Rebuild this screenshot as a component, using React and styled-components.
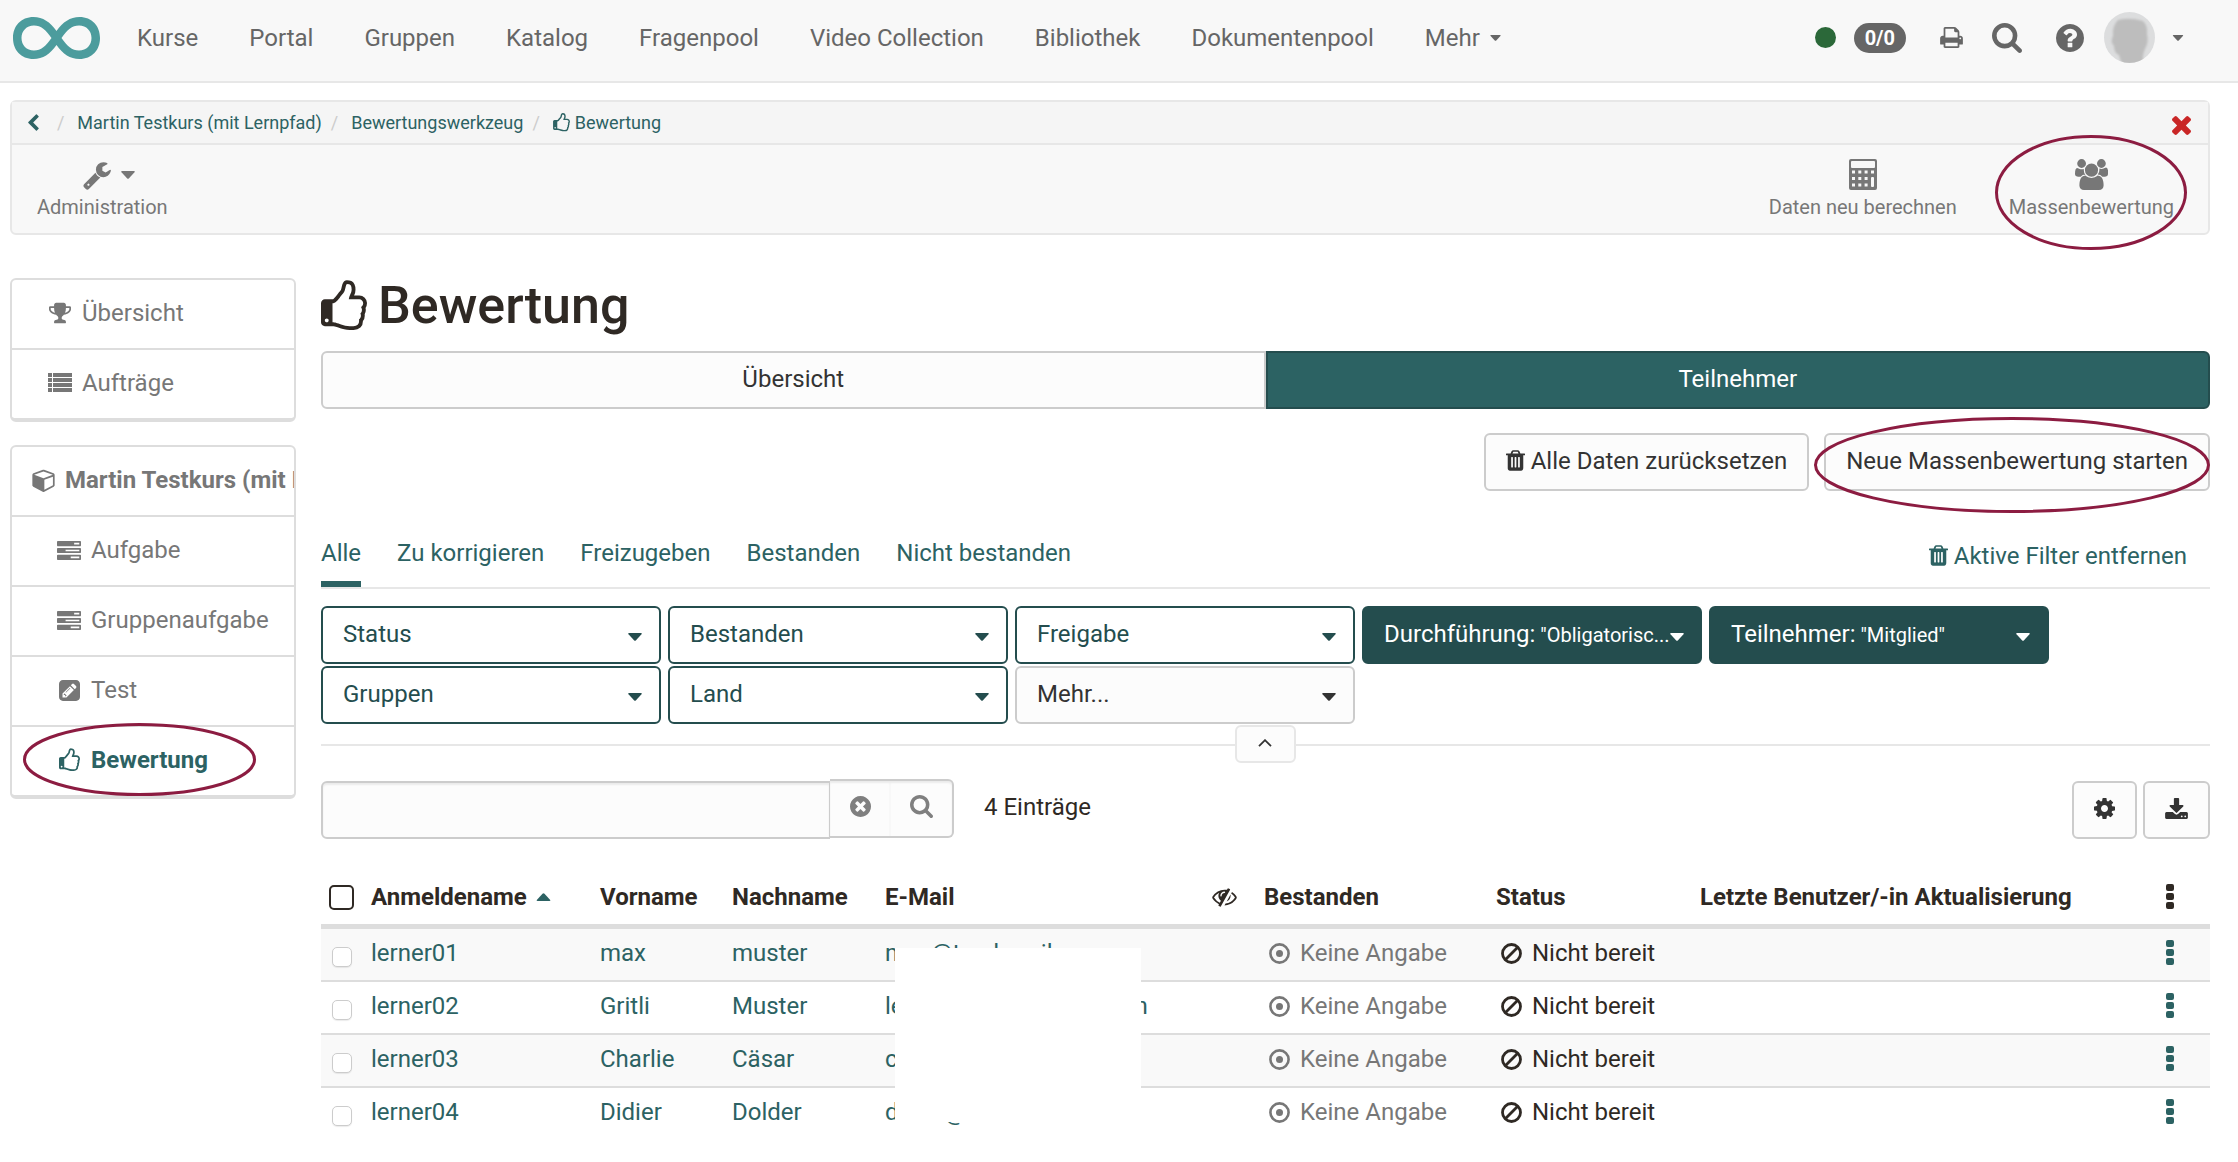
import React from "react";
import styled, { createGlobalStyle } from "styled-components";

const teal = "#2c6263";
const darkTeal = "#244d4e";
const grey = "#777";
const ink = "#2f2924";

const GlobalStyle = createGlobalStyle`
  *, *::before, *::after { box-sizing: border-box; }
  body {
    margin: 0;
    background: #fff;
    color: ${ink};
    font-family: Roboto, "Liberation Sans", sans-serif;
    font-size: 24px;
    line-height: 34px;
  }
  button, input { font: inherit; color: inherit; margin: 0; }
  button { cursor: pointer; }
  a { color: inherit; text-decoration: none; }
`;

/* ---------- icons ---------- */

const glyphs = {
  thumb: ["128 0 1536 1728", "M384 1344q0-26-19-45t-45-19-45 19-19 45 19 45 45 19 45-19 19-45zm1152-576q0-51-39-89.5t-89-38.5h-352q0-58 48-159.5t48-160.5q0-98-32-145t-128-47q-26 26-38 85t-30.5 125.5-59.5 109.5q-22 23-77 91-4 5-23 30t-31.5 41-34.5 42.5-40 44-38.5 35.5-40 27-35.5 9h-32v640h32q13 0 31.5 3t33 6.5 38 11 35 11.5 35.5 12.5 29 10.5q211 73 342 73h121q192 0 192-167 0-26-5-56 30-16 47.5-52.5t17.5-73.5-18-69q53-50 53-119 0-25-10-55.5t-25-47.5q32-1 53.5-47t21.5-81zm128-1q0 89-49 163 9 33 9 69 0 77-38 144 3 21 3 43 0 101-60 178 1 139-85 219.5t-227 80.5h-129q-96 0-189.5-22.5t-216.5-65.5q-116-40-138-40h-288q-53 0-90.5-37.5t-37.5-90.5v-640q0-53 37.5-90.5t90.5-37.5h274q36-24 137-155 58-75 107-128 24-25 35.5-85.5t30.5-126.5 62-108q39-37 90-37 84 0 151 32.5t102 101.5 35 186q0 93-48 192h176q104 0 180 76t76 179z"],
  wrench: ["64 0 1664 1792", "M448 1472q0-26-19-45t-45-19-45 19-19 45 19 45 45 19 45-19 19-45zm644-420l-682 682q-37 37-90 37-52 0-91-37l-106-108q-38-36-38-90 0-53 38-91l681-681q39 98 114.5 173.5t173.5 114.5zm634-435q0 39-23 106-47 134-164.5 217.5t-258.5 83.5q-185 0-316.5-131.5t-131.5-316.5 131.5-316.5 316.5-131.5q58 0 121.5 16.5t107.5 46.5q16 11 16 28t-16 28l-293 169v224l193 107q5-3 79-48.5t135.5-81 70.5-35.5q15 0 23.5 10t8.5 25z"],
  trophy: ["64 64 1664 1664", "M522 883q-74-162-74-371h-256v96q0 78 94.5 162t235.5 113zm1078-275v-96h-256q0 209-74 371 141-29 235.5-113t94.5-162zm128-128v128q0 71-41.5 143t-112 130-173 97.5-215.5 44.5q-42 54-95 95-38 34-52.5 72.5t-14.5 89.5q0 54 30.5 91t97.5 37q75 0 133.5 45.5t58.5 114.5v64q0 14-9 23t-23 9h-832q-14 0-23-9t-9-23v-64q0-69 58.5-114.5t133.5-45.5q67 0 97.5-37t30.5-91q0-51-14.5-89.5t-52.5-72.5q-53-41-95-95-113-5-215.5-44.5t-173-97.5-112-130-41.5-143v-128q0-40 28-68t68-28h288v-96q0-66 47-113t113-47h576q66 0 113 47t47 113v96h288q40 0 68 28t28 68z"],
  list: ["0 0 24 20", "M0 0h4v4H0zM5 0h19v4H5zM0 5h4v4H0zM5 5h19v4H5zM0 10h4v4H0zM5 10h19v4H5zM0 15h4v4H0zM5 15h19v4H5z"],
  cube: ["0 0 1664 1792", "M896 1629l640-349v-636l-640 233v752zm-64-865l698-254-698-254-698 254zm832-252v768q0 35-18 65t-49 47l-704 384q-28 16-61 16t-61-16l-704-384q-31-17-49-47t-18-65v-768q0-40 23-73t61-47l704-256q22-8 44-8t44 8l704 256q38 14 61 47t23 73z"],
  tasks: ["0 128 1792 1408", "M1024 1408h640v-128h-640v128zm-384-512h1024v-128h-1024v128zm640-512h384v-128h-384v128zm512 832v256q0 26-19 45t-45 19h-1664q-26 0-45-19t-19-45v-256q0-26 19-45t45-19h1664q26 0 45 19t19 45zm0-512v256q0 26-19 45t-45 19h-1664q-26 0-45-19t-19-45v-256q0-26 19-45t45-19h1664q26 0 45 19t19 45zm0-512v256q0 26-19 45t-45 19h-1664q-26 0-45-19t-19-45v-256q0-26 19-45t45-19h1664q26 0 45 19t19 45z"],
  edit: ["0 128 1536 1536", "M404 1108l152 152-52 52h-56v-96h-96v-56zm414-390q14 13-3 30l-291 291q-17 17-30 3-14-13 3-30l291-291q17-17 30-3zm-274 690l544-544-288-288-544 544v288h288zm608-608l92-92q28-28 28-68t-28-68l-152-152q-28-28-68-28t-68 28l-92 92zm384-384v960q0 119-84.5 203.5t-203.5 84.5h-960q-119 0-203.5-84.5t-84.5-203.5v-960q0-119 84.5-203.5t203.5-84.5h960q119 0 203.5 84.5t84.5 203.5z"],
  trash: ["192 128 1408 1536", "M704 1376v-704q0-14-9-23t-23-9h-64q-14 0-23 9t-9 23v704q0 14 9 23t23 9h64q14 0 23-9t9-23zm256 0v-704q0-14-9-23t-23-9h-64q-14 0-23 9t-9 23v704q0 14 9 23t23 9h64q14 0 23-9t9-23zm256 0v-704q0-14-9-23t-23-9h-64q-14 0-23 9t-9 23v704q0 14 9 23t23 9h64q14 0 23-9t9-23zm-544-992h448l-48-117q-7-9-17-11h-317q-10 2-17 11zm928 32v64q0 14-9 23t-23 9h-96v948q0 83-47 143.5t-113 60.5h-832q-66 0-113-58.5t-47-141.5v-952h-96q-14 0-23-9t-9-23v-64q0-14 9-23t23-9h309l70-167q15-37 54-63t79-26h320q40 0 79 26t54 63l70 167h309q14 0 23 9t9 23z"],
  cog: ["128 128 1536 1536", "M1152 896q0-106-75-181t-181-75-181 75-75 181 75 181 181 75 181-75 75-181zm512-109v222q0 12-8 23t-20 13l-185 28q-19 54-39 91 35 50 107 138 10 12 10 25t-9 23q-27 37-99 108t-94 71q-12 0-26-9l-138-108q-44 23-91 38-16 136-29 186-7 28-36 28h-222q-14 0-24.5-8.5t-11.5-21.5l-28-184q-49-16-90-37l-141 107q-10 9-25 9-14 0-25-11-126-114-165-168-7-10-7-23 0-12 8-23 15-21 51-66.5t54-70.5q-27-50-41-99l-183-27q-13-2-21-12.5t-8-23.5v-222q0-12 8-23t19-13l186-28q14-46 39-92-40-57-107-138-10-12-10-24 0-10 9-23 26-36 98.5-107.5t94.5-71.5q13 0 26 10l138 107q44-23 91-38 16-136 29-186 7-28 36-28h222q14 0 24.5 8.5t11.5 21.5l28 184q49 16 90 37l142-107q9-9 24-9 13 0 25 10 129 119 165 170 7 8 7 22 0 12-8 23-15 21-51 66.5t-54 70.5q26 50 41 98l183 28q13 2 21 12.5t8 23.5z"],
  search: ["64 128 1664 1664", "M1216 832q0-185-131.5-316.5t-316.5-131.5-316.5 131.5-131.5 316.5 131.5 316.5 316.5 131.5 316.5-131.5 131.5-316.5zm512 832q0 52-38 90t-90 38q-54 0-90-38l-343-342q-179 124-399 124-143 0-273.5-55.5t-225-150-150-225-55.5-273.5 55.5-273.5 150-225 225-150 273.5-55.5 273.5 55.5 225 150 150 225 55.5 273.5q0 220-124 399l343 343q37 37 37 90z"],
  clear: ["128 128 1536 1536", "M1277 1122q0-26-19-45l-181-181 181-181q19-19 19-45 0-27-19-46l-90-90q-19-19-46-19-26 0-45 19l-181 181-181-181q-19-19-45-19-27 0-46 19l-90 90q-19 19-19 46 0 26 19 45l181 181-181 181q-19 19-19 45 0 27 19 46l90 90q19 19 46 19 26 0 45-19l181-181 181 181q19 19 45 19 27 0 46-19l90-90q19-19 19-46zm387-226q0 209-103 385.5t-279.5 279.5-385.5 103-385.5-103-279.5-279.5-103-385.5 103-385.5 279.5-279.5 385.5-103 385.5 103 279.5 279.5 103 385.5z"],
  help: ["128 128 1536 1536", "M1024 1376v-192q0-14-9-23t-23-9h-192q-14 0-23 9t-9 23v192q0 14 9 23t23 9h192q14 0 23-9t9-23zm256-672q0-88-55.5-163t-138.5-116-170-41q-243 0-371 213-15 24 8 42l132 100q7 6 19 6 16 0 25-12 53-68 86-92 34-24 86-24 48 0 85.5 26t37.5 59q0 38-20 61t-68 45q-63 28-115.5 86.5t-52.5 125.5v36q0 14 9 23t23 9h192q14 0 23-9t9-23q0-19 21.5-49.5t54.5-49.5q32-18 49-28.5t46-35 44.5-48 28-60.5 12.5-81zm384 192q0 209-103 385.5t-279.5 279.5-385.5 103-385.5-103-279.5-279.5-103-385.5 103-385.5 279.5-279.5 385.5-103 385.5 103 279.5 279.5 103 385.5z"],
  download: ["64 0 1664 1536", "M1344 1344q0-26-19-45t-45-19-45 19-19 45 19 45 45 19 45-19 19-45zm256 0q0-26-19-45t-45-19-45 19-19 45 19 45 45 19 45-19 19-45zm128-224v320q0 40-28 68t-68 28h-1472q-40 0-68-28t-28-68v-320q0-40 28-68t68-28h465l135 136q58 56 136 56t136-56l136-136h464q40 0 68 28t28 68zm-325-569q17 41-14 70l-448 448q-18 19-45 19t-45-19l-448-448q-31-29-14-70 17-39 59-39h256v-448q0-26 19-45t45-19h256q26 0 45 19t19 45v448h256q42 0 59 39z"],
  print: ["64 128 1664 1536", "M448 1536h896v-256h-896v256zm0-640h896v-384h-160q-40 0-68-28t-28-68v-160h-640v640zm1152 64q0-26-19-45t-45-19-45 19-19 45 19 45 45 19 45-19 19-45zm128 0v416q0 13-9.500 22.500t-22.500 9.500h-224v160q0 40-28 68t-68 28h-960q-40 0-68-28t-28-68v-160h-224q-13 0-22.500-9.500t-9.500-22.500v-416q0-79 56.500-135.500t135.500-56.500h64v-544q0-40 28-68t68-28h672q40 0 88 20t76 48l152 152q28 28 48 76t20 88v256h64q79 0 135.500 56.500t56.500 135.500z"],
  close: ["302 366 1188 1188", "M1490 1322q0 40-28 68l-136 136q-28 28-68 28t-68-28l-294-294-294 294q-28 28-68 28t-68-28l-136-136q-28-28-28-68t28-68l294-294-294-294q-28-28-28-68t28-68l136-136q28-28 68-28t68 28l294 294 294-294q28-28 68-28t68 28l136 136q28 28 28 68t-28 68l-294 294 294 294q28 28 28 68z"],
  back: ["410 0 1040 1664", "M1427 301l-531 531 531 531q19 19 19 45t-19 45l-166 166q-19 19-45 19t-45-19l-742-742q-19-19-19-45t19-45l742-742q19-19 45-19t45 19l166 166q19 19 19 45t-19 45z"],
  users: ["64 0 1920 1792", "M657 896q-162 5-265 128h-134q-82 0-138-40.5t-56-118.5q0-353 124-353 6 0 43.5 21t97.5 42.5 119 21.5q67 0 133-23-5 37-5 66 0 159 93 283zm1071 637q0 120-73 189.5t-194 69.5h-874q-121 0-194-69.5t-73-189.5q0-53 3.5-103.5t14-109 26.5-108.5 43-97.5 62-81 85.5-53.5 111.5-20q10 0 43 21.5t73 48 107 48 135 21.5 135-21.5 107-48 73-48 43-21.5q61 0 111.5 20t85.5 53.5 62 81 43 97.5 26.5 108.5 14 109 3.5 103.5zm-1024-1277q0 106-75 181t-181 75-181-75-75-181 75-181 181-75 181 75 75 181zm704 384q0 159-112.5 271.5t-271.5 112.5-271.5-112.5-112.5-271.5 112.5-271.5 271.5-112.5 271.5 112.5 112.5 271.5zm576 225q0 78-56 118.5t-138 40.5h-134q-103-123-265-128 93-124 93-283 0-29-5-66 66 23 133 23 59 0 119-21.5t97.5-42.5 43.5-21q124 0 124 353zm-128-609q0 106-75 181t-181 75-181-75-75-181 75-181 181-75 181 75 75 181z"],
  hidden: ["0 192 1792 1536", "M555 1335l78-141q-87-63-136-159t-49-203q0-121 61-225-229 117-381 353 167 258 427 375zm389-759q0-20-14-34t-34-14q-125 0-214.5 89.5t-89.5 214.5q0 20 14 34t34 14 34-14 14-34q0-86 61-147t147-61q20 0 34-14t14-34zm363-191q0 7-1 9-106 189-316 567t-315 566l-49 89q-10 16-28 16-12 0-134-70-16-10-16-28 0-12 44-87-143-65-263.5-173t-208.5-245q-20-31-20-69t20-69q153-235 380-371t496-136q89 0 180 17l54-97q10-16 28-16 5 0 18 6t31 15.5 33 18.5 31.5 18.5 19.5 11.5q16 10 16 27zm37 447q0 139-79 253.5t-209 164.5l280-502q8 45 8 84zm448 128q0 35-20 69-39 64-109 145-150 172-347.5 267t-419.5 95l74-132q212-18 392.5-137t301.5-307q-115-179-282-294l63-112q95 64 182.5 153t144.5 184q20 34 20 69z"],
  calc: ["0 0 28 31", "M2 0h24a2 2 0 0 1 2 2v27a2 2 0 0 1-2 2H2a2 2 0 0 1-2-2V2a2 2 0 0 1 2-2zM2 3v5a1 1 0 0 0 1 1h22a1 1 0 0 0 1-1V3a1 1 0 0 0-1-1H3a1 1 0 0 0-1 1zM3 11.5h3v3H3zM9.300 11.5h3v3h-3zM15.600 11.5h3v3h-3zM22 11.5h3v3h-3zM3 18h3v3H3zM9.300 18h3v3h-3zM15.600 18h3v3h-3zM3 24.500h3v3H3zM9.300 24.500h3v3h-3zM15.600 24.500h3v3h-3zM23 18h1a1 1 0 0 1 1 1v8a1 1 0 0 1-1 1h-1a1 1 0 0 1-1-1v-8a1 1 0 0 1 1-1z"],
  down: ["0 0 14 8", "M1 0h12q1.500 0 .5 1.200l-5.500 6q-1 1-2 0l-5.500-6Q-.500 0 1 0z"],
  up: ["0 0 14 8", "M1 8h12q1.500 0 .5-1.200l-5.500-6q-1-1-2 0l-5.500 6Q-.500 8 1 8z"],
  dots: ["0 0 8 26", "M2 0h4q2 0 2 2v3q0 2-2 2H2q-2 0-2-2V2q0-2 2-2zM2 9h4q2 0 2 2v3q0 2-2 2H2q-2 0-2-2v-3q0-2 2-2zM2 18h4q2 0 2 2v3q0 2-2 2H2q-2 0-2-2v-3q0-2 2-2z"],
};

const Svg = styled.svg`
  display: block;
  flex: none;
  fill: currentColor;
`;

function Icon({ name, w, h }) {
  const [box, d] = glyphs[name];
  return (
    <Svg viewBox={box} width={w} height={h} aria-hidden="true">
      <path d={d} fillRule="evenodd" />
    </Svg>
  );
}

const StrokeSvg = styled(Svg)`
  fill: none;
  stroke: currentColor;
`;

const DotCircle = () => (
  <StrokeSvg width="21" height="21" viewBox="0 0 21 21" aria-hidden="true">
    <circle cx="10.5" cy="10.5" r="9.100" strokeWidth="2.600" />
    <circle cx="10.5" cy="10.5" r="3.500" fill="currentColor" stroke="none" />
  </StrokeSvg>
);

const Ban = () => (
  <StrokeSvg width="21" height="21" viewBox="0 0 21 21" aria-hidden="true">
    <circle cx="10.5" cy="10.5" r="9" strokeWidth="2.800" />
    <path d="M4.300 16.700L16.700 4.300" strokeWidth="2.800" />
  </StrokeSvg>
);

/* Marker ring lying over a control */
const Ring = styled.svg`
  position: absolute;
  z-index: 2;
  pointer-events: none;
  overflow: visible;
  fill: none;
  stroke: #8c1c41;
  stroke-width: 3px;
  left: ${(p) => p.$x}px;
  top: ${(p) => p.$y}px;
`;

function Marker({ x, y, w, h }) {
  return (
    <Ring $x={x} $y={y} width={w} height={h} aria-hidden="true">
      <ellipse cx={w / 2} cy={h / 2} rx={w / 2 - 1.5} ry={h / 2 - 1.5} />
    </Ring>
  );
}

/* ---------- top bar ---------- */

const TopBar = styled.header`
  display: flex;
  align-items: center;
  height: 83px;
  padding: 0 54px 6px 13px;
  background: #f8f8f8;
  border-bottom: 2px solid #e7e7e7;
  color: #666;
`;

const Nav = styled.nav`
  display: flex;
  gap: 51px;
  margin-left: 37px;
  white-space: nowrap;
`;

const NavLink = styled.a`
  display: flex;
  align-items: center;
  gap: 10px;
`;

const Tools = styled.div`
  display: flex;
  align-items: center;
  margin-left: auto;
`;

const PlainButton = styled.button`
  display: flex;
  align-items: center;
  justify-content: center;
  padding: 0;
  border: 0;
  background: none;
  color: ${(p) => p.$color || "inherit"};
  margin-left: ${(p) => p.$gap || 0}px;
`;

const Online = styled.span`
  width: 21px;
  height: 21px;
  border-radius: 50%;
  background: #2b6839;
`;

const Count = styled.span`
  margin-left: 18px;
  padding: 0 11px;
  border-radius: 15px;
  background: #666;
  color: #fff;
  font-size: 20px;
  font-weight: 700;
  line-height: 30px;
`;

/* ---------- breadcrumb and tool panel ---------- */

const Page = styled.div`
  padding: 17px 28px 20px 10px;
`;

const Panel = styled.section`
  border: 2px solid #e7e7e7;
  border-radius: 6px;
  background: #f8f8f8;
`;

const Crumbs = styled.nav`
  display: flex;
  align-items: center;
  height: 43px;
  padding: 0 17px 0 16px;
  background: #f5f5f5;
  border-bottom: 2px solid #e7e7e7;
  color: ${teal};
  font-size: 18px;
  line-height: 26px;
`;

const Crumb = styled.a`
  display: flex;
  align-items: center;
  gap: 5px;
`;

const Slash = styled.span`
  padding: 0 13px 0 9px;
  color: #ccc;
`;

const CloseSlot = styled.div`
  margin-left: auto;
  padding-top: 6px;
`;

const ToolRow = styled.div`
  display: flex;
  align-items: flex-start;
  justify-content: space-between;
  height: 88px;
  padding: 14px 34px 0 25px;
  color: ${grey};
`;

const ToolGroup = styled.div`
  display: flex;
  align-items: flex-start;
  gap: 52px;
`;

const ToolSlot = styled.div`
  position: relative;
`;

const Tool = styled(PlainButton)`
  flex-direction: column;
  font-size: 20px;
  line-height: 28px;
  gap: 3px;
`;

const ToolIcon = styled.span`
  display: flex;
  align-items: center;
  gap: 10px;
  height: 31px;
  padding-left: ${(p) => (p.$menu ? 14 : 0)}px;
`;

/* ---------- side menu ---------- */

const Body = styled.div`
  display: flex;
  gap: 25px;
  margin-top: 43px;
`;

const Side = styled.aside`
  flex: 0 0 286px;
  min-width: 0;
  display: flex;
  flex-direction: column;
  gap: 23px;
`;

const Menu = styled.nav`
  border: 2px solid #ddd;
  border-bottom-width: 4px;
  border-radius: 6px;
  color: ${grey};
`;

const MenuSlot = styled.div`
  position: relative;
  & + & { border-top: 2px solid #ddd; }
`;

const MenuItem = styled.a`
  display: flex;
  align-items: center;
  gap: 7px;
  height: 68px;
  padding: 0 0 2px ${(p) => p.$indent}px;
  overflow: hidden;
  white-space: nowrap;
  font-weight: ${(p) => (p.$bold ? 700 : 400)};
  color: ${(p) => (p.$active ? teal : "inherit")};
`;

const IconBox = styled.span`
  display: flex;
  justify-content: center;
  flex: 0 0 30px;
`;

/* ---------- content ---------- */

const Main = styled.main`
  flex: 1;
  min-width: 0;
`;

const Title = styled.h1`
  display: flex;
  align-items: center;
  gap: 11px;
  margin: 0 0 17px;
  font-size: 52px;
  line-height: 56px;
  font-weight: 500;
`;

const Segments = styled.div`
  display: grid;
  grid-template-columns: 1fr 1fr;
`;

const Button = styled.button`
  display: flex;
  align-items: center;
  justify-content: center;
  gap: 6px;
  height: 58px;
  padding: 0 20px 3px;
  border: 2px solid #ccc;
  border-radius: 6px;
  background: #fcfcfc;
  color: #333;
  white-space: nowrap;
`;

const Segment = styled(Button)`
  border-color: ${(p) => (p.$on ? darkTeal : "#ccc")};
  background: ${(p) => (p.$on ? teal : "#fcfcfc")};
  color: ${(p) => (p.$on ? "#fff" : "#333")};
  border-radius: ${(p) => (p.$on ? "0 6px 6px 0" : "6px 0 0 6px")};
`;

const Actions = styled.div`
  display: flex;
  justify-content: flex-end;
  gap: 15px;
  margin-top: 24px;
`;

const ActionSlot = styled.div`
  position: relative;
`;

const TabRow = styled.div`
  display: flex;
  justify-content: space-between;
  align-items: center;
  margin-top: 35px;
  padding-right: 23px;
  border-bottom: 2px solid #e7e7e7;
  color: ${teal};
`;

const Tabs = styled.div`
  display: flex;
  gap: 36px;
`;

const Tab = styled(PlainButton)`
  height: 61px;
  padding-bottom: 2px;
  border-bottom: 6px solid ${(p) => (p.$on ? teal : "transparent")};
`;

const RemoveFilters = styled(PlainButton)`
  gap: 6px;
  padding-bottom: 2px;
`;

const Filters = styled.div`
  display: flex;
  flex-wrap: wrap;
  gap: 2px 7px;
  margin-top: 17px;
`;

const Filter = styled.button`
  display: flex;
  align-items: center;
  justify-content: space-between;
  width: 340px;
  height: 58px;
  padding: 0 17px 2px 20px;
  border: 2px solid ${(p) => (p.$more ? "#ccc" : darkTeal)};
  border-radius: 6px;
  background: ${(p) => (p.$on ? darkTeal : p.$more ? "#fcfcfc" : "#fff")};
  color: ${(p) => (p.$on ? "#fff" : p.$more ? "#333" : darkTeal)};
  white-space: nowrap;
`;

const FilterValue = styled.span`
  font-size: 20px;
`;

const CaretSlot = styled.span`
  padding-top: 5px;
`;

const Divider = styled.div`
  position: relative;
  margin-top: 20px;
  border-top: 2px solid #e7e7e7;
`;

const Collapse = styled.button`
  position: absolute;
  left: 50%;
  top: -21px;
  display: flex;
  align-items: center;
  justify-content: center;
  width: 61px;
  height: 38px;
  margin-left: -31px;
  padding: 0 0 2px;
  border: 2px solid #e7e7e7;
  border-radius: 6px;
  background: #fcfcfc;
  color: #333;
`;

const SearchRow = styled.div`
  display: flex;
  align-items: center;
  justify-content: space-between;
  height: 60px;
  margin-top: 33px;
`;

const SearchGroup = styled.form`
  display: flex;
  align-items: center;
`;

const SearchInput = styled.input`
  align-self: flex-end;
  width: 509px;
  height: 58px;
  margin-top: 2px;
  padding: 0 20px;
  border: 2px solid #ccc;
  border-right-width: 1px;
  border-radius: 6px 0 0 6px;
  background: #fcfcfc;
  box-shadow: inset 0 2px 2px rgba(0, 0, 0, 0.07);
`;

const SearchButton = styled.button`
  display: flex;
  align-items: center;
  justify-content: center;
  align-self: flex-start;
  width: ${(p) => (p.$last ? 64 : 60)}px;
  height: 59px;
  padding: 0 0 4px;
  border: solid #ccc;
  border-width: ${(p) => (p.$last ? "2px 2px 2px 0" : "2px 0")};
  border-radius: ${(p) => (p.$last ? "0 6px 6px 0" : "0")};
  background: #fcfcfc;
  box-shadow: inset 0 2px 2px rgba(0, 0, 0, 0.07);
  color: #7f7f7f;
`;

const Total = styled.span`
  padding: 0 0 5px 30px;
`;

const TableButtons = styled.div`
  display: flex;
  align-self: flex-end;
  gap: 6px;
`;

/* ---------- table ---------- */

const Table = styled.table`
  width: 100%;
  margin-top: 31px;
  table-layout: fixed;
  border-spacing: 0;
`;

const Col = styled.col`
  width: ${(p) => (p.$w ? `${p.$w}px` : "auto")};
`;

const Th = styled.th`
  height: 59px;
  padding: 0 12px;
  border-bottom: 5px solid #ddd;
  text-align: left;
  font-weight: 700;
  white-space: nowrap;
  &:first-child { padding: 0 0 0 8px; }
`;

const Row = styled.tr`
  background: ${(p) => (p.$odd ? "#f9f9f9" : "#fff")};
  &:last-child td { border-bottom-color: transparent; }
`;

const Td = styled.td`
  position: relative;
  height: 53px;
  padding: 0 12px 3px;
  border-bottom: 2px solid #ddd;
  color: ${(p) => p.$color || teal};
  white-space: nowrap;
  &:first-child { padding: 4px 0 0 11px; }
`;

const Check = styled.input`
  appearance: none;
  display: block;
  width: ${(p) => (p.$all ? 25 : 20)}px;
  height: ${(p) => (p.$all ? 25 : 20)}px;
  border: ${(p) => (p.$all ? `2px solid ${ink}` : "1px solid #ccc")};
  border-radius: 5px;
  background: #fff;
  box-shadow: ${(p) => (p.$all ? "none" : "0 1px 1px rgba(0, 0, 0, 0.08)")};
`;

const Inline = styled.span`
  display: flex;
  align-items: center;
  gap: ${(p) => p.$gap || 6}px;
`;

const SortMark = styled.span`
  color: ${teal};
`;

const Cover = styled.span`
  position: absolute;
  z-index: 1;
  left: 22px;
  top: 19px;
  width: 246px;
  height: 174px;
  background: #fff;
`;

const menuOne = [
  ["trophy", 22, 22, "Übersicht"],
  ["list", 24, 20, "Aufträge"],
];

const menuTwo = [
  ["tasks", 24, 19, "Aufgabe"],
  ["tasks", 24, 19, "Gruppenaufgabe"],
  ["edit", 21, 21, "Test"],
];

const people = [
  ["lerner01", "max", "muster", "max@trashmail.com"],
  ["lerner02", "Gritli", "Muster", "lerner02@trashmail.com"],
  ["lerner03", "Charlie", "Cäsar", "c"],
  ["lerner04", "Didier", "Dolder", "didier@"],
];

const columns = [38, 229, 132, 153, 327, 52, 232, 204, 0, 56];

export default function App() {
  return (
    <>
      <GlobalStyle />
      <TopBar>
        <a href="#home" aria-label="Startseite">
          <Svg width="87" height="42" viewBox="0 0 87 42" aria-hidden="true">
            <path
              fill="#4c9c9d"
              fillRule="evenodd"
              d="M43.500 14C37 5 30 0 20.500 0C8 0 0 9 0 21S8 42 20.500 42C30 42 37 37 43.500 28C50 37 57 42 66.500 42C79 42 87 33 87 21S79 0 66.500 0C57 0 50 5 43.500 14ZM38.500 21C33 29 28 33.500 21 33.500C13.500 33.500 8.500 28 8.500 21S13.500 8.500 21 8.500C28 8.500 33 13 38.500 21ZM48.500 21C54 13 59 8.500 66 8.500C73.500 8.500 78.500 14 78.500 21S73.500 33.500 66 33.500C59 33.500 54 29 48.500 21Z"
            />
          </Svg>
        </a>
        <Nav aria-label="Hauptnavigation">
          {["Kurse", "Portal", "Gruppen", "Katalog", "Fragenpool", "Video Collection", "Bibliothek", "Dokumentenpool"].map((t) => (
            <NavLink key={t} href="#nav">{t}</NavLink>
          ))}
          <NavLink href="#mehr">Mehr <Icon name="down" w={11} h={6} /></NavLink>
        </Nav>
        <Tools>
          <Online />
          <Count>0/0</Count>
          <PlainButton $gap={34} aria-label="Drucken"><Icon name="print" w={23} h={21} /></PlainButton>
          <PlainButton $gap={29} aria-label="Suche"><Icon name="search" w={30} h={30} /></PlainButton>
          <PlainButton $gap={34} aria-label="Hilfe"><Icon name="help" w={28} h={28} /></PlainButton>
          <PlainButton $gap={20} aria-label="Profil">
            <Svg width="51" height="51" viewBox="0 0 51 51" aria-hidden="true">
              <defs>
                <clipPath id="face"><circle cx="25.5" cy="25.5" r="25.5" /></clipPath>
                <filter id="soft"><feGaussianBlur stdDeviation="1" /></filter>
              </defs>
              <circle cx="25.5" cy="25.5" r="25.5" fill="#dcddde" />
              <g clipPath="url(#face)">
                <path filter="url(#soft)" fill="#bdbdbd" d="M14 8Q26 5 39 9Q44 14 43 22Q45 30 41 37Q38 43 39 52H18Q16 47 15 43Q10 41 10 34Q6 30 9 24Q8 14 14 8Z" />
              </g>
            </Svg>
          </PlainButton>
          <PlainButton $gap={17} aria-label="Profilmenü"><Icon name="down" w={12} h={6} /></PlainButton>
        </Tools>
      </TopBar>

      <Page>
        <Panel>
          <Crumbs aria-label="Brotkrumen">
            <Crumb href="#back" aria-label="Zurück"><Icon name="back" w={11} h={17} /></Crumb>
            <Slash>&nbsp;&nbsp;/</Slash>
            <Crumb href="#kurs">Martin Testkurs (mit Lernpfad)</Crumb>
            <Slash>/</Slash>
            <Crumb href="#werkzeug">Bewertungswerkzeug</Crumb>
            <Slash>/</Slash>
            <Crumb href="#bewertung"><Icon name="thumb" w={17} h={19} />Bewertung</Crumb>
            <CloseSlot>
              <PlainButton $color="#c92626" aria-label="Schliessen"><Icon name="close" w={19} h={19} /></PlainButton>
            </CloseSlot>
          </Crumbs>
          <ToolRow>
            <Tool>
              <ToolIcon $menu><Icon name="wrench" w={28} h={30} /><Icon name="down" w={14} h={8} /></ToolIcon>
              Administration
            </Tool>
            <ToolGroup>
              <Tool>
                <ToolIcon><Icon name="calc" w={28} h={31} /></ToolIcon>
                Daten neu berechnen
              </Tool>
              <ToolSlot>
                <Tool>
                  <ToolIcon><Icon name="users" w={33} h={31} /></ToolIcon>
                  Massenbewertung
                </Tool>
                <Marker x={-14} y={-24} w={192} h={115} />
              </ToolSlot>
            </ToolGroup>
          </ToolRow>
        </Panel>

        <Body>
          <Side>
            <Menu aria-label="Bewertungswerkzeug">
              {menuOne.map(([icon, w, h, label]) => (
                <MenuSlot key={label}>
                  <MenuItem href="#menu" $indent={33}>
                    <IconBox><Icon name={icon} w={w} h={h} /></IconBox>{label}
                  </MenuItem>
                </MenuSlot>
              ))}
            </Menu>
            <Menu aria-label="Kurs">
              <MenuSlot>
                <MenuItem href="#kurs" $indent={16} $bold>
                  <IconBox><Icon name="cube" w={23} h={24} /></IconBox>Martin Testkurs (mit Lernpfad)
                </MenuItem>
              </MenuSlot>
              {menuTwo.map(([icon, w, h, label]) => (
                <MenuSlot key={label}>
                  <MenuItem href="#menu" $indent={42}>
                    <IconBox><Icon name={icon} w={w} h={h} /></IconBox>{label}
                  </MenuItem>
                </MenuSlot>
              ))}
              <MenuSlot>
                <MenuItem href="#bewertung" $indent={42} $bold $active>
                  <IconBox><Icon name="thumb" w={21} h={24} /></IconBox>Bewertung
                </MenuItem>
                <Marker x={11} y={-4} w={233} h={73} />
              </MenuSlot>
            </Menu>
          </Side>

          <Main>
            <Title><Icon name="thumb" w={46} h={52} />Bewertung</Title>
            <Segments>
              <Segment>Übersicht</Segment>
              <Segment $on>Teilnehmer</Segment>
            </Segments>
            <Actions>
              <Button><Icon name="trash" w={19} h={21} />Alle Daten zurücksetzen</Button>
              <ActionSlot>
                <Button>Neue Massenbewertung starten</Button>
                <Marker x={-10} y={-16} w={396} h={96} />
              </ActionSlot>
            </Actions>

            <TabRow>
              <Tabs>
                {["Alle", "Zu korrigieren", "Freizugeben", "Bestanden", "Nicht bestanden"].map((t, i) => (
                  <Tab key={t} $on={i === 0}>{t}</Tab>
                ))}
              </Tabs>
              <RemoveFilters><Icon name="trash" w={19} h={21} />Aktive Filter entfernen</RemoveFilters>
            </TabRow>

            <Filters>
              {[
                ["Status"],
                ["Bestanden"],
                ["Freigabe"],
                ["Durchführung:", "\"Obligatorisc..."],
                ["Teilnehmer:", "\"Mitglied\""],
                ["Gruppen"],
                ["Land"],
                ["Mehr..."],
              ].map(([name, value]) => (
                <Filter key={name} $on={!!value} $more={name === "Mehr..."}>
                  <span>{name}{value && <FilterValue> {value}</FilterValue>}</span>
                  <CaretSlot><Icon name="down" w={14} h={8} /></CaretSlot>
                </Filter>
              ))}
            </Filters>

            <Divider>
              <Collapse aria-label="Filter einklappen">
                <StrokeSvg width="14" height="8" viewBox="0 0 14 8" aria-hidden="true">
                  <path d="M1 7.200L7 1.200L13 7.200" strokeWidth="1.800" />
                </StrokeSvg>
              </Collapse>
            </Divider>

            <SearchRow>
              <SearchGroup onSubmit={(e) => e.preventDefault()}>
                <SearchInput type="text" aria-label="Suchen" />
                <SearchButton type="button" aria-label="Leeren"><Icon name="clear" w={21} h={21} /></SearchButton>
                <SearchButton $last aria-label="Suchen"><Icon name="search" w={23} h={23} /></SearchButton>
                <Total>4 Einträge</Total>
              </SearchGroup>
              <TableButtons>
                <Button aria-label="Einstellungen"><Icon name="cog" w={21} h={21} /></Button>
                <Button aria-label="Herunterladen"><Icon name="download" w={23} h={21} /></Button>
              </TableButtons>
            </SearchRow>

            <Table>
              <colgroup>
                {columns.map((w, i) => <Col key={i} $w={w} />)}
              </colgroup>
              <thead>
                <tr>
                  <Th><Check $all type="checkbox" aria-label="Alle auswählen" /></Th>
                  <Th><Inline $gap={9}>Anmeldename <SortMark><Icon name="up" w={15} h={8} /></SortMark></Inline></Th>
                  <Th>Vorname</Th>
                  <Th>Nachname</Th>
                  <Th>E-Mail</Th>
                  <Th aria-label="Sichtbarkeit"><Icon name="hidden" w={25} h={21} /></Th>
                  <Th>Bestanden</Th>
                  <Th>Status</Th>
                  <Th>Letzte Benutzer/-in Aktualisierung</Th>
                  <Th><PlainButton aria-label="Aktionen"><Icon name="dots" w={8} h={26} /></PlainButton></Th>
                </tr>
              </thead>
              <tbody>
                {people.map(([login, first, last, mail], i) => (
                  <Row key={login} $odd={i % 2 === 0}>
                    <Td><Check type="checkbox" aria-label={login} /></Td>
                    <Td><a href="#user">{login}</a></Td>
                    <Td><a href="#user">{first}</a></Td>
                    <Td><a href="#user">{last}</a></Td>
                    <Td><a href="#mail">{mail}</a>{i === 0 && <Cover />}</Td>
                    <Td />
                    <Td $color={grey}><Inline><IconBox><DotCircle /></IconBox>Keine Angabe</Inline></Td>
                    <Td $color={ink}><Inline><IconBox><Ban /></IconBox>Nicht bereit</Inline></Td>
                    <Td />
                    <Td><PlainButton $color={teal} aria-label="Aktionen"><Icon name="dots" w={8} h={26} /></PlainButton></Td>
                  </Row>
                ))}
              </tbody>
            </Table>
          </Main>
        </Body>
      </Page>
    </>
  );
}
